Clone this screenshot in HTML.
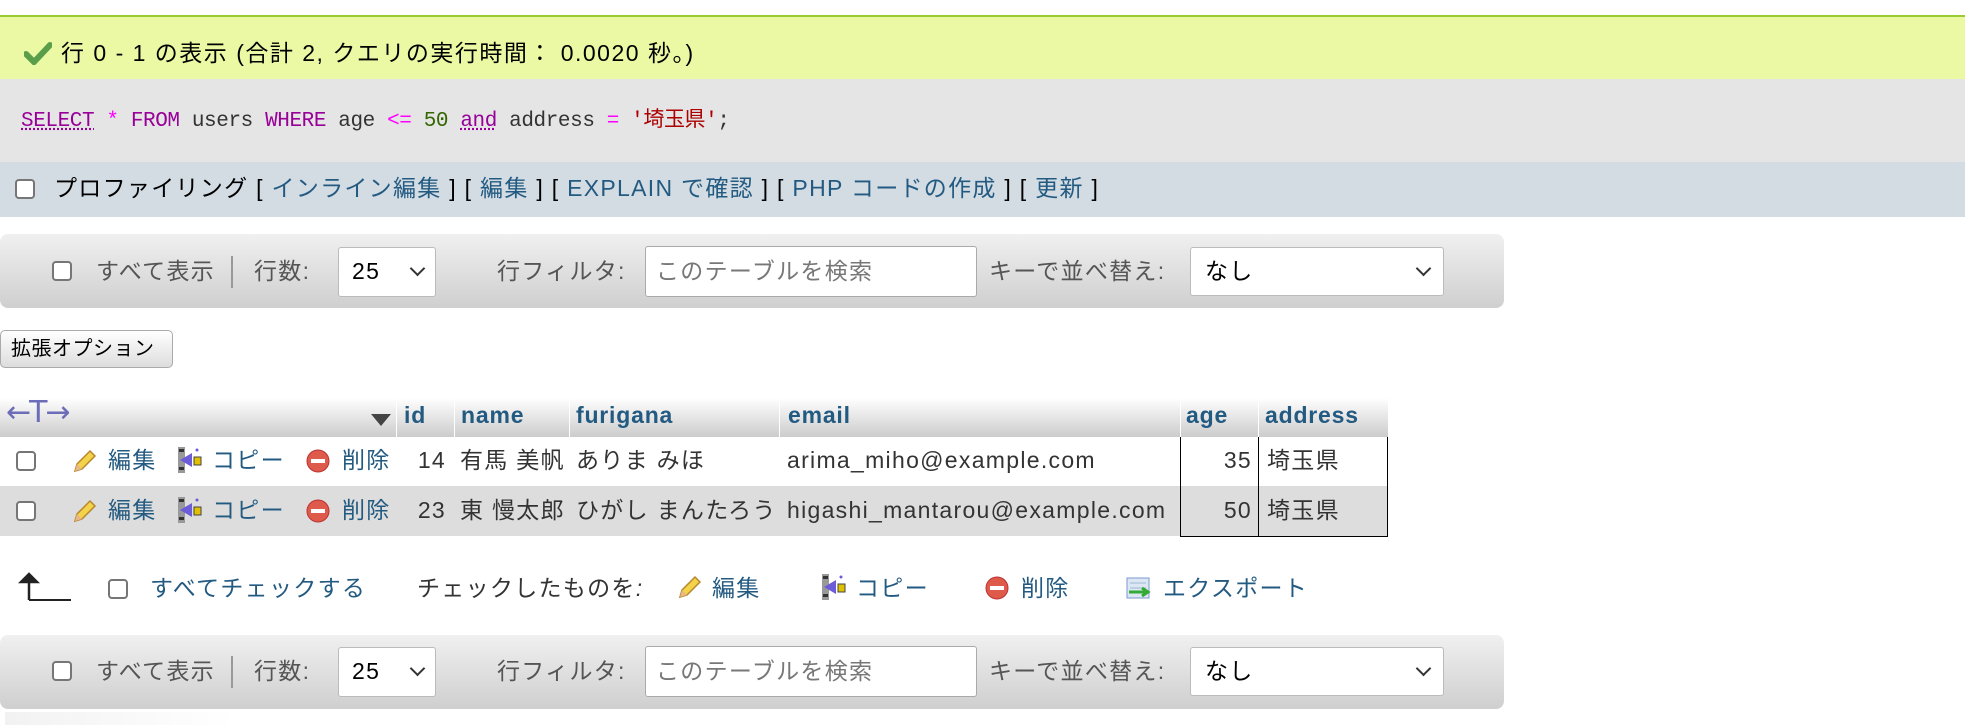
<!DOCTYPE html>
<html><head><meta charset="utf-8">
<style>
*{box-sizing:border-box;margin:0;padding:0}
body{width:1965px;height:725px;background:#fff;font-family:"Liberation Sans","Noto Sans CJK JP",sans-serif;font-size:23px;line-height:30px;letter-spacing:1.3px;color:#333;position:relative;overflow:hidden}
.a{position:absolute;white-space:nowrap}
.l{color:#235a81}
.r{text-align:right}
.cb{position:absolute;width:20px;height:20px;border:2px solid #767676;border-radius:4px;background:#fff}
.tb{position:absolute;left:0;width:1504px;height:74px;border-radius:8px;background:linear-gradient(#f0f0f0,#cfcfcf)}
.sel{position:absolute;background:#fff;border:1px solid #bbb;border-radius:3px;height:50px}
.chev{position:absolute;width:11px;height:11px;border-right:2px solid #333;border-bottom:2px solid #333;transform:rotate(45deg)}
.hdr{position:absolute;top:398px;height:39px;background:linear-gradient(#fff,#ccc)}
.hdr span{position:absolute;top:2px;font-weight:bold;color:#235a81;font-size:23px;letter-spacing:0.8px}
.mono{font-family:"Liberation Mono","Noto Sans CJK JP",monospace;font-size:20px;letter-spacing:0}
</style></head><body>
<div class="a" style="left:0;top:15px;width:1965px;height:2px;background:#9c3"></div>
<div class="a" style="left:0;top:17px;width:1965px;height:62px;background:#ebf8a4"></div>
<svg class="a" style="left:24px;top:41px" width="28" height="24" viewBox="0 0 28 24"><path d="M2 13 L10 21 L26 4" stroke="#5a9e4a" stroke-width="6" fill="none" stroke-linecap="round"/></svg>
<div class="a" style="left:61px;top:38px;color:#000;letter-spacing:1.5px">行 0 - 1 の表示 (合計 2, クエリの実行時間： 0.0020 秒。)</div>
<div class="a" style="left:0;top:79px;width:1965px;height:83px;background:#e5e5e5"></div>
<div class="a mono" style="left:21px;top:107px;font-size:21px;letter-spacing:-0.4px"><span style="color:#909;text-decoration:underline dotted">SELECT</span> <span style="color:#f0f">*</span> <span style="color:#909">FROM</span> <span style="color:#333">users</span> <span style="color:#909">WHERE</span> age <span style="color:#f0f">&lt;=</span> <span style="color:#360">50</span> <span style="color:#909;text-decoration:underline dotted">and</span> address <span style="color:#f0f">=</span> <span style="color:#a00">'埼玉県'</span>;</div>
<div class="a" style="left:0;top:162px;width:1965px;height:55px;background:#d3dce3"></div>
<div class="cb" style="left:15px;top:179px"></div>
<div class="a" style="left:54px;top:173px;color:#000;letter-spacing:1.3px">プロファイリング [ <span class="l">インライン編集</span> ] [ <span class="l">編集</span> ] [ <span class="l">EXPLAIN で確認</span> ] [ <span class="l">PHP コードの作成</span> ] [ <span class="l">更新</span> ]</div>

<!-- toolbar 1 -->
<div class="tb" style="top:234px"></div>
<div class="cb" style="left:52px;top:261px"></div>
<div class="a" style="left:96px;top:256px;color:#555">すべて表示</div>
<div class="a" style="left:231px;top:256px;width:2px;height:32px;background:#999"></div>
<div class="a" style="left:254px;top:256px;color:#555">行数:</div>
<div class="sel" style="left:338px;top:247px;width:98px"></div>
<div class="a" style="left:352px;top:256px;color:#000">25</div><div class="chev" style="left:412px;top:263px"></div>
<div class="a" style="left:497px;top:256px;color:#555">行フィルタ:</div>
<div class="sel" style="left:645px;top:246px;width:332px;height:51px;border-color:#aaa"></div>
<div class="a" style="left:656px;top:256px;color:#777">このテーブルを検索</div>
<div class="a" style="left:989px;top:256px;color:#555">キーで並べ替え:</div>
<div class="sel" style="left:1190px;top:247px;width:254px;height:49px"></div>
<div class="a" style="left:1205px;top:256px;color:#000">なし</div><div class="chev" style="left:1418px;top:263px"></div>

<div class="a" style="left:0;top:330px;width:173px;height:38px;border:1px solid #aaa;border-radius:5px;background:linear-gradient(#fff,#ddd);padding:3px 0 0 10px;font-size:20px;letter-spacing:0.5px;color:#000">拡張オプション</div>

<!-- table header -->
<div class="hdr" style="left:0;width:396px"><span style="left:6px;top:0px;color:#6c6cb8;font-weight:normal;font-size:30px;letter-spacing:-2px;font-family:'DejaVu Sans',sans-serif">←T→</span></div>
<svg class="a" style="left:370px;top:413px" width="22" height="14"><path d="M1 1 H21 L11 13 Z" fill="#444"/></svg>
<div class="hdr" style="left:397px;width:57px"><span style="left:7px">id</span></div>
<div class="hdr" style="left:455px;width:114px"><span style="left:6px">name</span></div>
<div class="hdr" style="left:570px;width:209px"><span style="left:6px">furigana</span></div>
<div class="hdr" style="left:780px;width:400px"><span style="left:8px">email</span></div>
<div class="hdr" style="left:1181px;width:77px"><span style="left:5px">age</span></div>
<div class="hdr" style="left:1259px;width:129px"><span style="left:6px">address</span></div>

<div class="a" style="left:0;top:486px;width:1388px;height:50px;background:#ddd"></div>
<div class="a" style="left:1180px;top:437px;width:208px;height:100px;border:1px solid #000;border-top:none"></div>
<div class="a" style="left:1258px;top:437px;width:1px;height:99px;background:#000"></div>

<!-- rows -->
<div class="cb" style="left:16px;top:451px"></div>
<div class="cb" style="left:16px;top:501px"></div>
<svg width="0" height="0" style="position:absolute"><defs>
<g id="pen"><path d="M3 22 L5 15 L18 2 L23 7 L10 20 Z" fill="#f3d34a" stroke="#b8862d" stroke-width="1.5"/><path d="M3 22 L5 15 L10 20 Z" fill="#e8b888"/></g>
<g id="cp"><rect x="1" y="1" width="7" height="26" fill="#999"/><rect x="2" y="3" width="5" height="3" fill="#333"/><rect x="2" y="21" width="5" height="3" fill="#333"/><path d="M3 14 L15 7 V21 Z" fill="#6c5cd8"/><rect x="17" y="11" width="7" height="8" fill="#e0c000" stroke="#444"/><circle cx="20" cy="4" r="1.5" fill="#6c5cd8"/></g>
<g id="del"><circle cx="12" cy="12" r="11" fill="#de5a4a" stroke="#b33" /><rect x="5" y="10" width="14" height="4" fill="#fff"/></g>
</defs></svg>
<svg class="a" style="left:72px;top:449px" width="26" height="26"><use href="#pen"/></svg>
<svg class="a" style="left:72px;top:499px" width="26" height="26"><use href="#pen"/></svg>
<svg class="a" style="left:177px;top:446px" width="26" height="30"><use href="#cp"/></svg>
<svg class="a" style="left:177px;top:496px" width="26" height="30"><use href="#cp"/></svg>
<svg class="a" style="left:306px;top:449px" width="26" height="26"><use href="#del"/></svg>
<svg class="a" style="left:306px;top:499px" width="26" height="26"><use href="#del"/></svg>
<div class="a l" style="left:108px;top:445px">編集</div><div class="a l" style="left:212px;top:445px">コピー</div><div class="a l" style="left:342px;top:445px">削除</div>
<div class="a l" style="left:108px;top:495px">編集</div><div class="a l" style="left:212px;top:495px">コピー</div><div class="a l" style="left:342px;top:495px">削除</div>
<div class="a r" style="left:396px;width:50px;top:445px">14</div><div class="a" style="left:460px;top:445px">有馬 美帆</div><div class="a" style="left:576px;top:445px">ありま みほ</div><div class="a" style="left:787px;top:445px">arima_miho@example.com</div><div class="a r" style="left:1190px;width:62px;top:445px">35</div><div class="a" style="left:1267px;top:445px">埼玉県</div>
<div class="a r" style="left:396px;width:50px;top:495px">23</div><div class="a" style="left:460px;top:495px">東 慢太郎</div><div class="a" style="left:576px;top:495px">ひがし まんたろう</div><div class="a" style="left:787px;top:495px">higashi_mantarou@example.com</div><div class="a r" style="left:1190px;width:62px;top:495px">50</div><div class="a" style="left:1267px;top:495px">埼玉県</div>

<!-- footer -->
<svg class="a" style="left:18px;top:572px" width="54" height="30"><path d="M11 28 V4 M3 10 L11 2 L19 10 Z" stroke="#222" stroke-width="2.5" fill="#222"/><path d="M11 28 H53" stroke="#222" stroke-width="2"/></svg>
<div class="cb" style="left:108px;top:579px"></div>
<div class="a l" style="left:150px;top:573px">すべてチェックする</div>
<div class="a" style="left:417px;top:573px">チェックしたものを<i>:</i></div>
<svg class="a" style="left:677px;top:575px" width="26" height="26"><use href="#pen"/></svg><div class="a l" style="left:712px;top:573px">編集</div>
<svg class="a" style="left:821px;top:573px" width="26" height="30"><use href="#cp"/></svg><div class="a l" style="left:856px;top:573px">コピー</div>
<svg class="a" style="left:985px;top:576px" width="26" height="26"><use href="#del"/></svg><div class="a l" style="left:1021px;top:573px">削除</div>
<svg class="a" style="left:1126px;top:577px" width="28" height="24"><rect x="1" y="1" width="22" height="20" fill="#dde6f4" stroke="#7a9ad0"/><path d="M4 6 H20 M4 11 H20" stroke="#9bc" /><path d="M3 15 H20 M16 11 L22 15 L16 19" stroke="#3a3" stroke-width="3" fill="none"/></svg><div class="a l" style="left:1163px;top:573px">エクスポート</div>

<!-- toolbar 2 -->
<div class="tb" style="top:635px"></div>
<div class="cb" style="left:52px;top:661px"></div>
<div class="a" style="left:96px;top:656px;color:#555">すべて表示</div>
<div class="a" style="left:231px;top:656px;width:2px;height:32px;background:#999"></div>
<div class="a" style="left:254px;top:656px;color:#555">行数:</div>
<div class="sel" style="left:338px;top:647px;width:98px"></div>
<div class="a" style="left:352px;top:656px;color:#000">25</div><div class="chev" style="left:412px;top:663px"></div>
<div class="a" style="left:497px;top:656px;color:#555">行フィルタ:</div>
<div class="sel" style="left:645px;top:646px;width:332px;height:51px;border-color:#aaa"></div>
<div class="a" style="left:656px;top:656px;color:#777">このテーブルを検索</div>
<div class="a" style="left:989px;top:656px;color:#555">キーで並べ替え:</div>
<div class="sel" style="left:1190px;top:647px;width:254px;height:49px"></div>
<div class="a" style="left:1205px;top:656px;color:#000">なし</div><div class="chev" style="left:1418px;top:663px"></div>
<div class="a" style="left:5px;top:712px;width:230px;height:13px;background:linear-gradient(90deg,#f2f2f2,#fff)"></div>
</body></html>
